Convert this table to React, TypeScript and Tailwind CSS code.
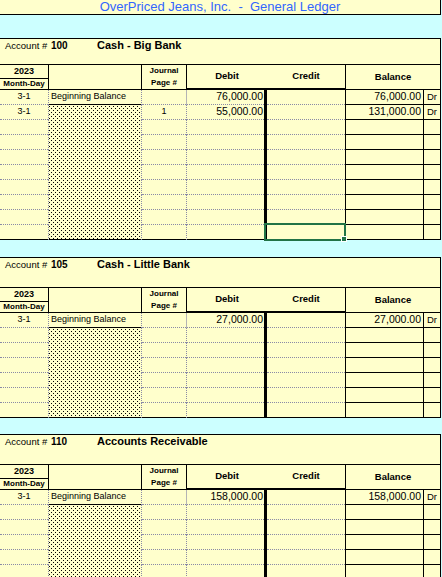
import React, { useId } from "react";

type Entry = {
  date: string;
  desc?: string;
  page?: string;
  debit?: string;
  balance?: string;
};

type Account = {
  no: string;
  name: string;
  topH: string;
  rows: number;
  selectLast?: boolean;
  entries: Entry[];
};

const accounts: Account[] = [
  {
    no: "100",
    name: "Cash - Big Bank",
    topH: "h-[25px]",
    rows: 10,
    selectLast: true,
    entries: [
      { date: "3-1", desc: "Beginning Balance", debit: "76,000.00", balance: "76,000.00" },
      { date: "3-1", page: "1", debit: "55,000.00", balance: "131,000.00" },
    ],
  },
  {
    no: "105",
    name: "Cash - Little Bank",
    topH: "h-[29px]",
    rows: 7,
    entries: [{ date: "3-1", desc: "Beginning Balance", debit: "27,000.00", balance: "27,000.00" }],
  },
  {
    no: "110",
    name: "Accounts Receivable",
    topH: "h-[29px]",
    rows: 7,
    entries: [{ date: "3-1", desc: "Beginning Balance", debit: "158,000.00", balance: "158,000.00" }],
  },
];

// border pieces
const DOT_R = "border-r border-dotted border-[#8a8aa6]";
const DOT_B = "border-b border-dotted border-[#8a8aa6]";
const BLK_R = "border-r border-black";
const BLK_B = "border-b border-black";
const THICK_R = "border-r-[3px] border-black";
const GRAY_R = "border-r border-[#b4b4b4]";

// excel style dotted shading, offset per row so it runs on unbroken
function Shade({ row }: { row: number }) {
  const id = useId();
  return (
    <svg className="block w-full h-full" shapeRendering="crispEdges">
      <defs>
        <pattern id={id} width="4" height="4" y={-(row * 15)} patternUnits="userSpaceOnUse">
          <rect x="0" y="0" width="1" height="1" fill="#000" />
          <rect x="2" y="2" width="1" height="1" fill="#000" />
        </pattern>
      </defs>
      <rect width="100%" height="100%" fill={`url(#${id})`} />
    </svg>
  );
}

function Cell({
  w,
  right = "",
  bottom = "",
  className = "",
  outer = "",
  children,
}: {
  w: string;
  right?: string;
  bottom?: string;
  className?: string;
  outer?: string;
  children?: React.ReactNode;
}) {
  return (
    <div className={`${w} ${right} ${outer} flex shrink-0`}>
      <div className={`flex-1 min-w-0 flex items-center ${bottom} ${className}`}>{children}</div>
    </div>
  );
}

function LedgerRow({
  entry,
  index,
  last,
  selected,
}: {
  entry?: Entry;
  index: number;
  last: boolean;
  selected?: boolean;
}) {
  const b = last ? BLK_B : DOT_B;
  return (
    <div className="flex h-[15px]">
      <Cell w="w-[49px]" right={DOT_R} bottom={b} className="justify-center text-[9px]">
        {entry?.date}
      </Cell>
      {entry?.desc ? (
        <Cell w="w-[93px]" right={DOT_R} bottom={BLK_B} className="pl-[2px] text-[9px] whitespace-nowrap">
          {entry.desc}
        </Cell>
      ) : (
        <Cell w="w-[93px]" right={DOT_R} bottom={last ? BLK_B : ""} className="items-stretch">
          <Shade row={index} />
        </Cell>
      )}
      <Cell w="w-[45px]" right={index === 0 ? GRAY_R : DOT_R} bottom={b} className="justify-center text-[9px]">
        {entry?.page}
      </Cell>
      <Cell w="w-[80px]" right={THICK_R} bottom={b} className="justify-end pr-[1px] text-[10.5px]">
        {entry?.debit}
      </Cell>
      <Cell w="w-[79px]" right={BLK_R} bottom={b} outer="relative">
        {selected && (
          <div className="absolute left-[-3px] top-[-2px] w-[82px] h-[18px] border-2 border-[#217346] z-10">
            <div className="absolute right-[-3px] bottom-[-3px] w-[6px] h-[6px] bg-[#217346] border border-white" />
          </div>
        )}
      </Cell>
      <Cell w="w-[78px]" right={BLK_R} bottom={BLK_B} className="justify-end pr-[2px] text-[10.5px]">
        {entry?.balance}
      </Cell>
      <Cell w="w-[16px]" bottom={BLK_B} className="pl-[3px] text-[9.5px]">
        {entry?.balance ? "Dr" : ""}
      </Cell>
    </div>
  );
}

function Section({ acct }: { acct: Account }) {
  return (
    <div className="w-[441px] border-t border-r border-black bg-[#ffffcc]">
      {/* account title */}
      <div className={`${acct.topH} flex items-baseline leading-[12px]`}>
        <span className="w-[51px] shrink-0 pl-[5px] text-[9.5px]">Account #</span>
        <span className="w-[46px] shrink-0 text-[10px] font-bold">{acct.no}</span>
        <span className="text-[11px] font-bold">{acct.name}</span>
      </div>

      {/* column heads */}
      <div className="flex h-[26px] border-t border-black font-bold">
        <div className="w-[49px] shrink-0 flex flex-col border-r border-black">
          <div className="h-[14px] border-b border-black flex items-center justify-center text-[9px]">2023</div>
          <div className="flex-1 border-b border-black flex items-center justify-center text-[8px] leading-none">
            Month-Day
          </div>
        </div>
        <div className="w-[93px] shrink-0 border-r border-b border-black" />
        <div className="w-[45px] shrink-0 border-r border-b border-black flex flex-col items-center justify-center text-[8px] leading-[12.5px]">
          <span>Journal</span>
          <span>Page #</span>
        </div>
        <div className="w-[80px] shrink-0 border-b-2 border-black flex items-center justify-center text-[9.5px]">
          Debit
        </div>
        <div className="w-[79px] shrink-0 border-r border-b-2 border-black flex items-center justify-center text-[9.5px]">
          Credit
        </div>
        <div className="flex-1 border-b border-black flex items-center justify-center text-[9.5px]">Balance</div>
      </div>

      {Array.from({ length: acct.rows }).map((_, i) => (
        <LedgerRow
          key={i}
          entry={acct.entries[i]}
          index={i}
          last={i === acct.rows - 1}
          selected={acct.selectLast && i === acct.rows - 1}
        />
      ))}
    </div>
  );
}

export default function App() {
  return (
    <div className="w-[442px] h-[577px] overflow-hidden bg-[#ccffff] text-black font-['Liberation_Sans',Arial,sans-serif]">
      <div className="w-[441px] h-[15px] border-r border-b border-black bg-[#ffffcc] text-center text-[13px] leading-[14px] text-[#3366ff] whitespace-pre">
        OverPriced Jeans, Inc.  -  General Ledger
      </div>
      <div className="h-[23px]" />
      <Section acct={accounts[0]} />
      <div className="h-[17px]" />
      <Section acct={accounts[1]} />
      <div className="h-[16px]" />
      <Section acct={accounts[2]} />
    </div>
  );
}
